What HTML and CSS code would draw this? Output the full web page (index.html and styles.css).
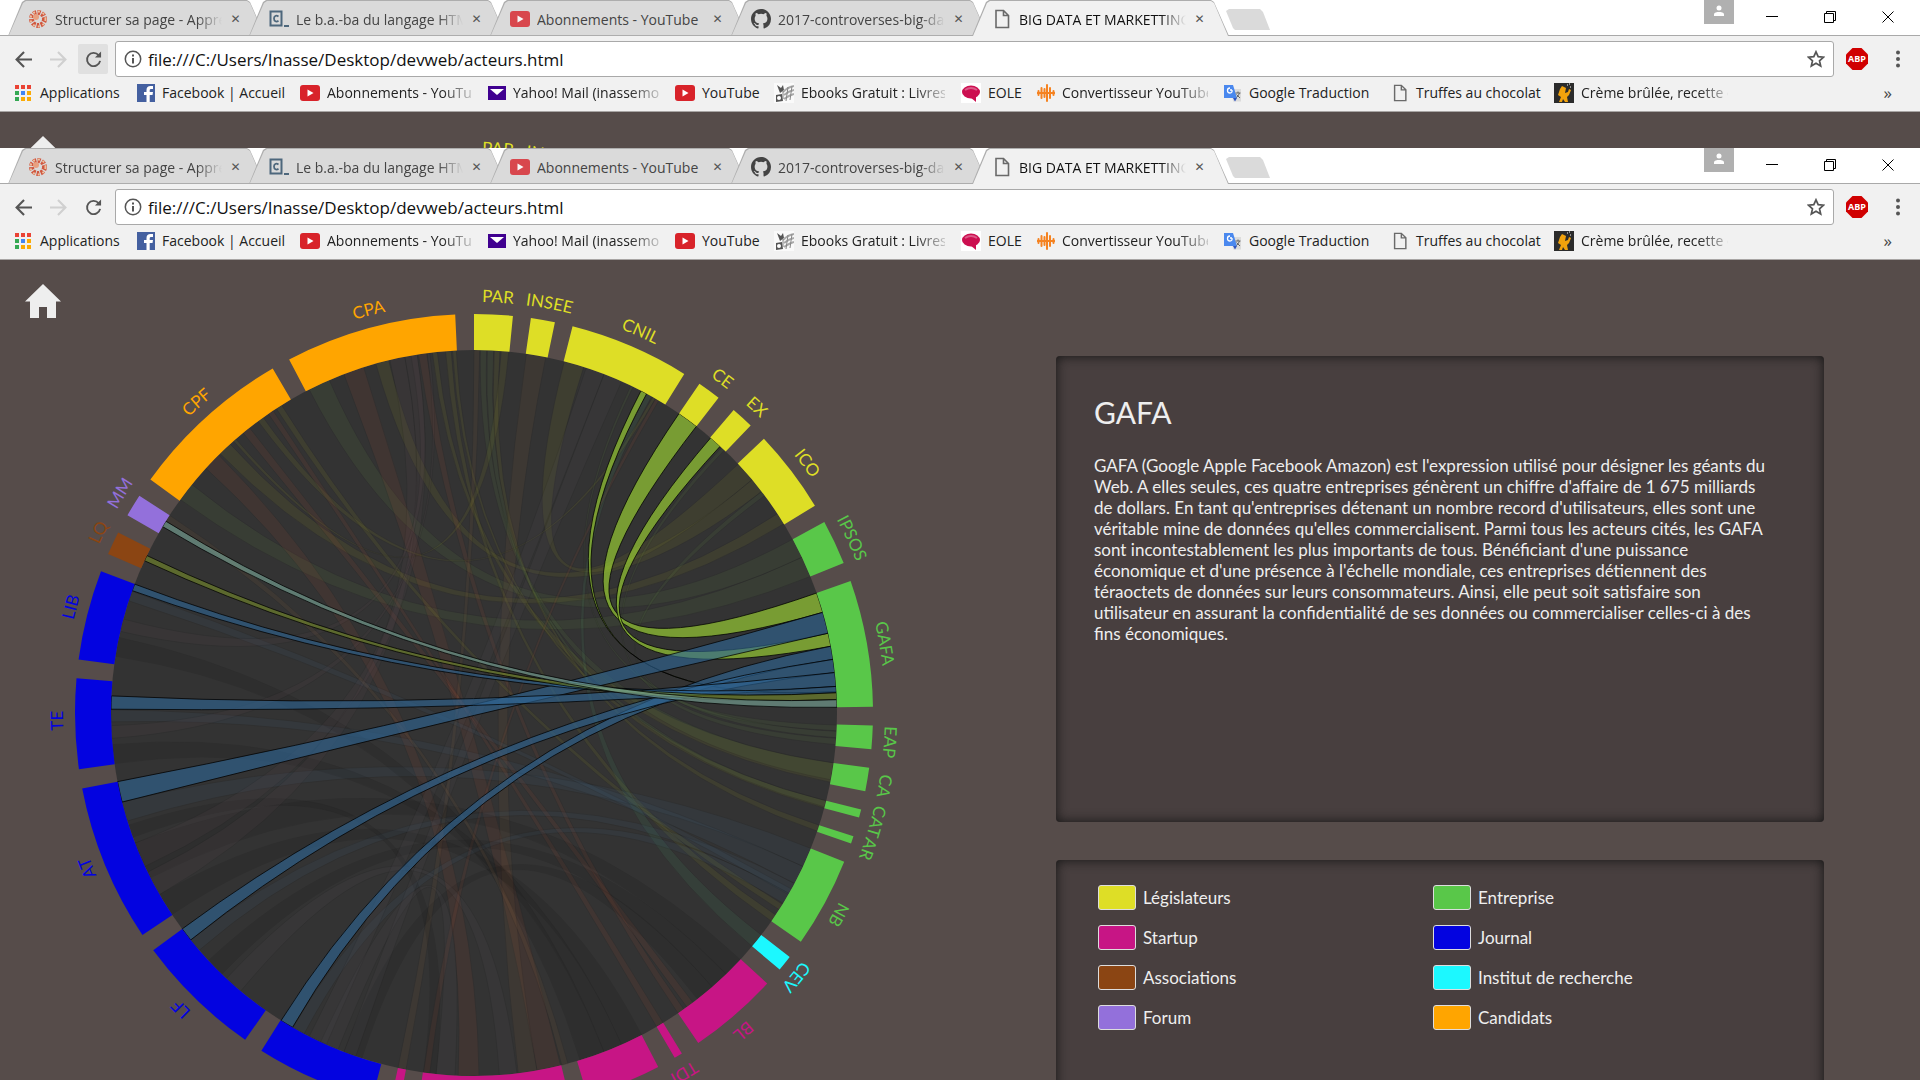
FILE: index.html
```html
<!DOCTYPE html>
<html lang="fr">
<head>
<meta charset="utf-8">
<title>BIG DATA ET MARKETTING</title>
<link rel="stylesheet" href="styles.css">
</head>
<body>
<svg class="defs" aria-hidden="true">
  <symbol id="i-yt" viewBox="0 0 20 18"><rect y="1" width="20" height="16" rx="3" fill="#d8232a"/><path d="M7.500 5.500v7l6-3.500z" fill="#fff"/></symbol>
  <symbol id="i-doc" viewBox="0 0 16 20"><path d="M2 1.500h7.500l5 5v12H2zM9.500 1.500v5h5" fill="none" stroke="#6a6a6a" stroke-width="1.600"/></symbol>
  <symbol id="i-cookie" viewBox="0 0 20 20"><circle cx="10" cy="10" r="6.500" fill="none" stroke="#d0573f" stroke-width="5" stroke-dasharray="3 1.200"/><circle cx="10" cy="10" r="7.500" fill="none" stroke="#ecc0a0" stroke-width="2" stroke-dasharray="2 3"/><circle cx="8" cy="8" r="3" fill="#e8a080"/></symbol>
  <symbol id="i-code" viewBox="0 0 20 18"><path d="M1.500 1.500h11v14h-11z" fill="none" stroke="#4d677c" stroke-width="2"/><path d="M9.500 6.500C7 4.800 5 6 5 8.600s2.200 3.800 4.500 2.200M15 16h5" fill="none" stroke="#4d677c" stroke-width="1.800"/></symbol>
  <symbol id="i-git" viewBox="0 0 16 16"><path fill="#444" d="M8 0C3.580 0 0 3.580 0 8c0 3.540 2.290 6.530 5.470 7.590.4.070.55-.17.550-.38v-1.490c-2.010.37-2.530-.49-2.690-.94-.09-.23-.48-.94-.82-1.130-.28-.15-.68-.52-.01-.53.630-.01 1.080.58 1.230.82.720 1.210 1.870.87 2.330.66.070-.52.280-.87.510-1.070-1.780-.2-3.640-.89-3.640-3.950 0-.87.310-1.590.82-2.150-.08-.2-.36-1.020.08-2.120 0 0 .67-.21 2.200.82a7.600 7.600 0 0 1 4 0c1.530-1.040 2.200-.82 2.200-.82.440 1.100.16 1.920.08 2.120.51.560.82 1.270.82 2.150 0 3.070-1.870 3.750-3.650 3.950.29.250.54.730.54 1.480v2.200c0 .21.150.46.550.38A8 8 0 0 0 16 8c0-4.420-3.580-8-8-8z"/></symbol>
</svg>

<section class="window window-back" data-window="back">
  <header class="chrome">
    <div class="tabstrip">
      <div class="tabs">
        <div class="tab"><svg class="fav"><use href="#i-cookie"/></svg><span class="tab-title">Structurer sa page - Apprenez</span><button class="close" aria-label="Fermer">✕</button></div>
        <div class="tab"><svg class="fav"><use href="#i-code"/></svg><span class="tab-title">Le b.a.-ba du langage HTML</span><button class="close" aria-label="Fermer">✕</button></div>
        <div class="tab"><svg class="fav faded"><use href="#i-yt"/></svg><span class="tab-title whole">Abonnements - YouTube</span><button class="close" aria-label="Fermer">✕</button></div>
        <div class="tab"><svg class="fav"><use href="#i-git"/></svg><span class="tab-title">2017-controverses-big-data</span><button class="close" aria-label="Fermer">✕</button></div>
        <div class="tab active"><svg class="fav"><use href="#i-doc"/></svg><span class="tab-title">BIG DATA ET MARKETTING</span><button class="close" aria-label="Fermer">✕</button></div>
        <button class="new-tab" aria-label="Nouvel onglet"></button>
      </div>
      <div class="controls">
        <button class="avatar" aria-label="Profil"><svg viewBox="0 0 10 12"><circle cx="5" cy="3" r="2.500" fill="#fff"/><path d="M0 11V9.500C0 7.500 3 7 5 7s5 .5 5 2.500V11z" fill="#fff"/></svg></button>
        <button class="ctl" aria-label="Réduire"><svg viewBox="0 0 12 12"><path d="M0 5.500h12" stroke="#000" fill="none"/></svg></button>
        <button class="ctl" aria-label="Restaurer"><svg viewBox="0 0 12 12"><path d="M.5 2.500h9v9h-9zM2.500 2.500v-2h9v9h-2" stroke="#000" fill="none"/></svg></button>
        <button class="ctl" aria-label="Quitter"><svg viewBox="0 0 12 12"><path d="M.5.5l11 11M11.500.5l-11 11" stroke="#000" fill="none"/></svg></button>
      </div>
    </div>
    <div class="toolbar">
      <button class="nav" aria-label="Précédent"><svg viewBox="0 0 16 16"><path d="M16 8H1.500M8.500 1L1.500 8l7 7" fill="none" stroke="#555" stroke-width="2"/></svg></button>
      <button class="nav" aria-label="Suivant"><svg viewBox="0 0 16 16"><path d="M0 8h14.500M7.500 1l7 7-7 7" fill="none" stroke="#d0d0d0" stroke-width="2"/></svg></button>
      <button class="nav reload" aria-label="Actualiser"><svg viewBox="0 0 18 18"><path d="M14.500 4.500A7 7 0 1 0 16 10.500" fill="none" stroke="#555" stroke-width="2"/><path d="M17 .5V7h-6.500z" fill="#555"/></svg></button>
      <div class="omnibox">
        <svg class="info" viewBox="0 0 18 18"><circle cx="9" cy="9" r="7.700" fill="none" stroke="#555" stroke-width="1.500"/><path d="M9 4.500v2M9 8v5.500" stroke="#555" stroke-width="2"/></svg>
        <input class="url" type="text" aria-label="Adresse" value="file:///C:/Users/Inasse/Desktop/devweb/acteurs.html">
        <button class="star" aria-label="Ajouter aux favoris"><svg viewBox="0 0 18 18"><path d="M9 1.800l2.200 4.900 5.300.5-4 3.600 1.200 5.300L9 13.300l-4.700 2.800 1.200-5.300-4-3.600 5.300-.5z" fill="none" stroke="#555" stroke-width="1.700"/></svg></button>
      </div>
      <button class="abp" aria-label="Adblock Plus"><svg viewBox="0 0 22 22"><path d="M6.500 0h9L22 6.500v9L15.500 22h-9L0 15.500v-9z" fill="#d00000"/><text x="11" y="14" text-anchor="middle" class="abp-text">ABP</text></svg></button>
      <button class="menu" aria-label="Menu"><svg viewBox="0 0 4 18"><g fill="#555"><circle cx="2" cy="2.500" r="2"/><circle cx="2" cy="9" r="2"/><circle cx="2" cy="15.500" r="2"/></g></svg></button>
    </div>
    <nav class="bookmarks">
      <a href="#"><svg class="bm" viewBox="0 0 18 18"><path d="M0 1h4v4H0zM6 1h4v4H6zM12 1h4v4h-4z" fill="#ea4335"/><path d="M0 7h4v4H0zM0 13h4v4H0z" fill="#34a853"/><path d="M6 7h4v4H6z" fill="#4285f4"/><path d="M12 7h4v4h-4zM6 13h4v4H6zM12 13h4v4h-4z" fill="#fbab05"/></svg><span>Applications</span></a>
      <a href="#"><svg class="bm" viewBox="0 0 18 18"><path d="M0 0h18v18H0z" fill="#4460a0"/><path d="M9.500 18v-7H7V8h2.500V6c0-2.700 1.500-4 4-4H16v3h-1.700C13 5 12.700 5.500 12.700 6.500V8H16l-.5 3h-2.800v7z" fill="#fff"/></svg><span>Facebook | Accueil</span></a>
      <a href="#"><svg class="bm wide"><use href="#i-yt"/></svg><span class="cut">Abonnements - YouTube</span></a>
      <a href="#"><svg class="bm" viewBox="0 0 18 16"><path d="M0 1h18v14H0z" fill="#400090"/><path d="M2 4h14L9 10z" fill="#fff"/></svg><span class="cut">Yahoo! Mail (inassemoh</span></a>
      <a href="#"><svg class="bm wide"><use href="#i-yt"/></svg><span>YouTube</span></a>
      <a href="#"><svg class="bm wide" viewBox="0 0 20 20"><path d="M0 0h20v20H0z" fill="#fafafa"/><path d="M3 2l4 3 2-3 1 5-4 3zM2 12l6-1 1 7-7 1z" fill="#555"/><path d="M9 9q5-5 11-6M10 12q5-4 10-5M10 16q6-4 10-5" fill="none" stroke="#aaa" stroke-width="2"/><path d="M14 4l-2 14M18 3l-2 14M9 8v8" fill="none" stroke="#888"/><circle cx="5" cy="15" r="2" fill="#fff"/></svg><span class="cut">Ebooks Gratuit : Livres num</span></a>
      <a href="#"><svg class="bm wide" viewBox="0 0 20 20"><path d="M0 0h20v20H0z" fill="#fff"/><ellipse cx="10" cy="9" rx="9" ry="6.500" fill="#cc0f50"/><path d="M9 14h6v5z" fill="#cc0f50"/><path d="M4 7q6-4 12 0" fill="none" stroke="#dc5a88" stroke-width="2"/></svg><span>EOLE</span></a>
      <a href="#"><svg class="bm" viewBox="0 0 18 18"><path d="M1.500 7v4M4.500 4v10M7.500 5v8M10 1v16M13 4v10M16.500 7v4M0 9h18" fill="none" stroke="#f58220" stroke-width="2" stroke-linecap="round"/></svg><span class="cut">Convertisseur YouTube mp3</span></a>
      <a href="#"><svg class="bm" viewBox="0 0 18 18"><path d="M7 5h10v12.500H9z" fill="#dcdcdc"/><path d="M0 1h9l4 13H0z" fill="#4a88ee"/><path d="M9 14h4l-2 3.500z" fill="#2f55c0"/><path d="M8 6H6M8 6q.5 3-2 3T3.500 6.500 6 4" fill="none" stroke="#fff" stroke-width="1.300"/><path d="M11.500 9h5M14 7.500V9M15.500 9q-1 3-3 4.500M12.500 10.500l3.500 3.500" fill="none" stroke="#666"/></svg><span>Google Traduction</span></a>
      <a href="#"><svg class="bm"><use href="#i-doc"/></svg><span>Truffes au chocolat</span></a>
      <a href="#"><svg class="bm wide" viewBox="0 0 20 20"><path d="M0 0h20v20H0z" fill="#2b2b2b"/><path d="M8 3l4 2-1 5 3-1 1-3 2 1-2 5-2 2 1 5h-3l-2-3-1 3H5l2-5-3-2 2-6z" fill="#f2a20c"/><path d="M13 2h1M16 4h1M15 1h1" stroke="#fff"/></svg><span class="cut">Crème brûlée, recette de</span></a>
      <button class="more" aria-label="Autres favoris">»</button>
    </nav>
  </header>
  <main class="page">
    <a class="home" href="#" aria-label="Accueil"><svg viewBox="0 0 36 34"><path d="M18 0l18 17.500h-5V34h-9V23h-8v11H5V17.500H0z" fill="#eee"/></svg></a>
    <svg class="chart" viewBox="0 0 946 910" role="img" aria-label="Relations entre les acteurs"></svg>
    <div class="side">
      <article class="panel story">
        <h1>GAFA</h1>
        <p>GAFA (Google Apple Facebook Amazon) est l'expression utilisé pour désigner les géants du Web. A elles seules, ces quatre entreprises génèrent un chiffre d'affaire de 1 675 milliards de dollars. En tant qu'entreprises détenant un nombre record d'utilisateurs, elles sont une véritable mine de données qu'elles commercialisent. Parmi tous les acteurs cités, les GAFA sont incontestablement les plus importants de tous. Bénéficiant d'une puissance économique et d'une présence à l'échelle mondiale, ces entreprises détiennent des téraoctets de données sur leurs consommateurs. Ainsi, elle peut soit satisfaire son utilisateur en assurant la confidentialité de ses données ou commercialiser celles-ci à des fins économiques.</p>
      </article>
      <ul class="panel legend">
        <li><i class="swatch leg"></i>Législateurs</li>
        <li><i class="swatch ent"></i>Entreprise</li>
        <li><i class="swatch sta"></i>Startup</li>
        <li><i class="swatch jou"></i>Journal</li>
        <li><i class="swatch ass"></i>Associations</li>
        <li><i class="swatch ins"></i>Institut de recherche</li>
        <li><i class="swatch for"></i>Forum</li>
        <li><i class="swatch can"></i>Candidats</li>
      </ul>
    </div>
  </main>
</section>
<script src="script.js"></script>
</body>
</html>
```
FILE: styles.css
```css
* { box-sizing: border-box; }
html, body { height: 100%; margin: 0; overflow: hidden; }
body { display: flex; flex-direction: column; background: #564c4a; font-family: "Open Sans", "Noto Sans", sans-serif; }
button { border: 0; padding: 0; background: none; font: inherit; color: inherit; }
a { color: inherit; text-decoration: none; }
svg { display: block; flex: none; }
.defs { position: absolute; width: 0; height: 0; }

.window { flex: 1 0 0; min-height: 0; overflow: hidden; display: flex; flex-direction: column; }
.window-back { flex: 0 0 148px; }
.chrome { flex: none; background: #f1f1f1; border-bottom: 1px solid #a8a5a4; }

.tabstrip { display: flex; justify-content: space-between; align-items: flex-start; height: 36px; background: linear-gradient(#fff 35px, #a9a9a9 35px); }
.tabs { display: flex; padding-left: 8px; }
.tab { position: relative; z-index: 0; display: flex; align-items: center; width: 257px; height: 36px; margin-right: -16px; padding: 2px 24px 0 20px; font-size: 14px; color: #444; }
.tab::before, .tab::after { content: ""; position: absolute; z-index: -1; inset: 0; background: #adadad; clip-path: polygon(0 100%, 14px 2px, 17px 0, 239px 0, 242px 2px, 100% 100%); }
.tab::after { inset: 1px 1px; background: #dadada; clip-path: polygon(0 100%, 14px 2px, 17px 0, 238px 0, 241px 2px, 100% 100%); }
.tab.active { z-index: 1; color: #111; }
.tab.active::after { inset: 1px 1px 0; background: #f1f1f1; }
.fav { width: 20px; height: 20px; }
.faded { opacity: .8; }
.tab-title { flex: 1; margin: 0 8px 0 7px; overflow: hidden; white-space: nowrap; mask-image: linear-gradient(90deg, #000 85%, transparent); }
.tab-title.whole { mask-image: none; }
.close { width: 11px; font: 12px "DejaVu Sans", sans-serif; color: #555; }
.new-tab { width: 44px; height: 21px; margin: 9px 0 0 13px; background: #dadada; clip-path: polygon(0 2px, 3px 0, 34px 0, 37px 3px, 100% 100%, 9px 100%, 7px 90%); }
.controls { display: flex; align-items: center; gap: 46px; padding-right: 26px; }
.avatar { width: 30px; height: 24px; margin-right: -14px; padding: 4px 10px 6px; background: #b0b0b0; }
.avatar svg { width: 10px; height: 12px; }
.ctl { padding-top: 10px; }
.ctl svg { width: 12px; height: 12px; }

.toolbar { display: flex; align-items: center; height: 42px; padding: 4px 20px 0 8px; }
.nav { display: grid; place-items: center; width: 30px; height: 30px; margin-right: 5px; border-radius: 2px; }
.nav svg { width: 17px; height: 17px; }
.window-back .reload { background: #e0e0e0; }
.omnibox { flex: 1; display: flex; align-items: center; height: 36px; margin-left: 2px; padding: 0 8px; background: #fff; border: 1px solid #a9a9a9; border-radius: 3px; }
.info { width: 18px; height: 18px; }
.url { flex: 1; margin-left: 6px; padding: 0; border: 0; background: none; font: 17px "Open Sans", "Noto Sans", sans-serif; color: #111; }
.star svg { width: 18px; height: 18px; }
.abp { margin: 0 28px 0 12px; }
.abp svg { width: 22px; height: 22px; }
.abp-text { font: bold 9px "Open Sans", sans-serif; fill: #fff; }
.menu svg { width: 4px; height: 18px; }

.bookmarks { display: grid; grid-template-columns: 122px 163px 188px 187px 99px 187px 76px 187px 167px 163px 190px 1fr; align-items: center; height: 33px; padding: 0 28px 4px 15px; font-size: 14px; color: #222; }
.bookmarks a { display: flex; align-items: center; gap: 7px; padding-right: 16px; white-space: nowrap; }
.cut { overflow: hidden; mask-image: linear-gradient(90deg, #000 calc(100% - 30px), rgba(0, 0, 0, .2)); }
.bm { width: 18px; height: 18px; }
.bm.wide { width: 20px; height: 20px; }
.more { justify-self: end; font-size: 17px; color: #444; }

.page { position: relative; flex: 1; min-height: 0; display: flex; align-items: flex-start; justify-content: space-between; overflow: hidden; background: #564c4a; color: #eee; font-family: Lato, "Open Sans", sans-serif; }
.home { position: absolute; left: 25px; top: 24px; }
.home svg { width: 36px; height: 34px; }
.chart { flex: 0 1 946px; min-width: 0; }
.chart text { font: 17px Lato, sans-serif; }
.side { flex: 0 0 40%; display: flex; flex-direction: column; gap: 38px; margin: 96px 5% 0 0; }
.panel { margin: 0; background: #483f3f; border-radius: 4px; box-shadow: inset 0 0 12px #151515; font-size: 17px; line-height: 21px; }
.story { min-height: 466px; padding: 37px 54px 38px 38px; }
.story h1 { margin: 0 0 24px; font-size: 30px; font-weight: 400; line-height: 38px; }
.story p { margin: 0; }
.legend { display: grid; grid-template-columns: 1fr 1fr; grid-auto-rows: 40px; align-content: start; min-height: 300px; padding: 17px 56px 0 42px; list-style: none; }
.legend li { display: flex; align-items: center; gap: 7px; }
.swatch { width: 38px; height: 25px; border: 1px solid #ddd; border-radius: 3px; }
.leg { background: #dede26; }
.ent { background: #59c749; }
.sta { background: #c71585; }
.jou { background: #0303e0; }
.ass { background: #8b4513; }
.ins { background: #1cf8ff; }
.for { background: #9370db; }
.can { background: #ffa500; }
```
FILE: script.js
```js
const NS = "http://www.w3.org/2000/svg";
const CX = 474, CY = 453, OUTER = 399, INNER = 363, LABEL = 411;

const YELLOW = "#dede26", GREEN = "#59c749", CYAN = "#1cf8ff", PINK = "#c71585",
  BLUE = "#0303e0", BROWN = "#8b4513", PURPLE = "#9370db", ORANGE = "#ffa500";

// name, start angle, end angle (degrees, clockwise from the top), colour
const groups = [
  ["PAR", 0, 5.6, YELLOW], ["INSEE", 8.2, 11.7, YELLOW], ["CNIL", 14.3, 31.8, YELLOW],
  ["CE", 34.4, 37.8, YELLOW], ["EX", 40.6, 43.9, YELLOW], ["ICO", 46.6, 58.7, YELLOW],
  ["IPSOS", 61.4, 67.9, GREEN], ["GAFA", 70.7, 89.1, GREEN], ["EAP", 91.8, 95.2, GREEN],
  ["CA", 97.9, 101.3, GREEN], ["CAT", 104, 105.2, GREEN], ["AR", 108, 109.1, GREEN],
  ["NB", 111.9, 125, GREEN], ["CEV", 127.7, 130, CYAN], ["BL", 132.7, 145.8, PINK],
  ["TDI", 148.6, 149.8, PINK], ["", 152.5, 163.5, PINK], ["", 166.1, 188.1, PINK],
  ["", 190.8, 192.1, PINK], ["LM", 194.8, 212.2, BLUE], ["LF", 215, 233.5, BLUE],
  ["AT", 236.2, 259.1, BLUE], ["TE", 261.9, 275, BLUE], ["LIB", 277.7, 290.8, BLUE],
  ["LQ", 293.5, 296.9, BROWN], ["MM", 299.7, 303, PURPLE], ["CPF", 305.8, 329.7, ORANGE],
  ["CPA", 332.4, 357.3, ORANGE]
];

const OL = "#8c8c22", GR = "#5f8a40", RD = "#a04830", BR = "#8a6038", BL = "#3c6080",
  DK = "#101010", LT = "#555058", MV = "#604a52", TL = "#4a9a6a";

// source start/end, target start/end, colour
const faint = [
  [333, 336.5, 61.4, 64.6, GR], [306, 309, 64.6, 67.9, GR], [315.6, 317.8, 56.7, 58.6, OL],
  [312.4, 315.3, 179.2, 182.5, RD], [339, 342.3, 166.2, 170, RD], [8.3, 11.4, 170, 173, BR],
  [344.3, 346.4, 50, 52.4, OL], [14.4, 17.6, 46.7, 50, OL], [351.2, 352.5, 144.7, 145.8, RD],
  [320.5, 321.8, 142.9, 144.1, RD], [325.5, 326.4, 148.6, 149.8, RD], [353.4, 354.2, 97.9, 101, OL],
  [355.5, 356.4, 123.8, 125, OL], [356.6, 357.2, 104, 105.2, OL], [0, .9, 190.8, 192.1, BR],
  [1, 2, 97.9, 100.6, GR], [2.1, 3.1, 104, 105, GR], [3.2, 4.1, 108, 109, OL],
  [4.3, 5.5, 318.5, 319, OL], [28.4, 29.3, 127.7, 130, TL], [323.5, 324.5, 29.5, 30, OL],
  [30, 30.6, 187, 188, RD], [327, 328, 121.8, 122.8, OL],
  [111.9, 115, 252.7, 255.8, BL], [115, 118, 268.6, 270.5, BL], [118, 119.8, 229.2, 231.3, BL],
  [119.8, 121.6, 207.9, 209.9, BL], [91.9, 92.8, 52.4, 53.2, GR], [92.9, 93.9, 25.6, 26, GR],
  [94, 95, 43, 43.6, GR], [288, 289.6, 119, 120, BL],
  [132.8, 136, 243, 249, DK], [136, 139, 224, 227, DK], [139, 142, 198, 201, DK],
  [152.5, 156, 236.3, 240, DK], [156, 159, 262, 265, DK], [159, 163, 279, 282, DK],
  [173.2, 176, 220, 223, LT], [183, 186, 202, 205, LT],
  [186, 188, 250, 252, DK], [240, 244, 346.6, 349, MV], [245, 249, 349, 351, MV],
  [266, 268, 352.6, 353, MV], [283, 285, 350, 351, MV], [204, 207, 18, 21, LT],
  [199, 201, 21, 24, LT], [301.9, 303, 165, 166, BR]
];

const lime = "#a6e233", sea = "#2e6897", olive = "#788e2b", mist = "#7dab9d";
const strong = [
  [27.4, 28.4, 86.6, 86.6, lime], [34.4, 37.8, 70.7, 73.9, lime], [40.7, 42.7, 77.3, 79.4, lime],
  [73.9, 77.3, 255.8, 259.1, sea], [79.4, 81.5, 210, 212.1, sea], [81.5, 83.6, 231.3, 233.5, sea],
  [83.6, 85.8, 270.6, 272.7, sea], [85.8, 86.8, 289.7, 290.8, sea],
  [86.8, 87.9, 294.8, 295.7, olive], [87.9, 89.1, 300.9, 301.9, mist]
];

function node(name, attrs, parent) {
  const el = document.createElementNS(NS, name);
  for (const key in attrs) el.setAttribute(key, attrs[key]);
  parent.appendChild(el);
  return el;
}

function at(radius, deg) {
  const a = deg * Math.PI / 180;
  return (CX + radius * Math.sin(a)).toFixed(2) + " " + (CY - radius * Math.cos(a)).toFixed(2);
}

function arc(r, a, b) {
  return `A${r} ${r} 0 0 ${b >= a ? 1 : 0} ${at(r, b)}`;
}

function ribbon([a, b, c, d]) {
  return `M${at(INNER, a)}${arc(INNER, a, b)}Q${CX} ${CY} ${at(INNER, c)}${arc(INNER, c, d)}Q${CX} ${CY} ${at(INNER, a)}Z`;
}

function draw(svg, id) {
  node("circle", { cx: CX, cy: CY, r: INNER, fill: "#333" }, svg);
  for (const c of faint) {
    node("path", { d: ribbon(c), fill: c[4], opacity: .12, stroke: "#000", "stroke-opacity": .6 }, svg);
  }
  for (const c of strong) {
    node("path", { d: ribbon(c), fill: c[4], "fill-opacity": .6, stroke: "#000", "stroke-opacity": .75 }, svg);
  }
  groups.forEach(([name, a, b, color], i) => {
    node("path", { d: `M${at(OUTER, a)}${arc(OUTER, a, b)}L${at(INNER, b)}${arc(INNER, b, a)}Z`, fill: color }, svg);
    if (!name) return;
    const mid = (a + b) / 2 + .5;
    const ref = id + "-label-" + i;
    node("path", { id: ref, d: `M${at(LABEL, mid - 10)}${arc(LABEL, mid - 10, mid + 10)}`, fill: "none" }, svg);
    const text = node("text", { fill: color, "text-anchor": "middle" }, svg);
    node("textPath", { href: "#" + ref, startOffset: "50%" }, text).textContent = name;
  });
}

const back = document.querySelector(".window-back");
const front = back.cloneNode(true);
front.classList.remove("window-back");
front.dataset.window = "front";
back.after(front);
document.querySelectorAll(".window").forEach(w => draw(w.querySelector(".chart"), w.dataset.window));
```
